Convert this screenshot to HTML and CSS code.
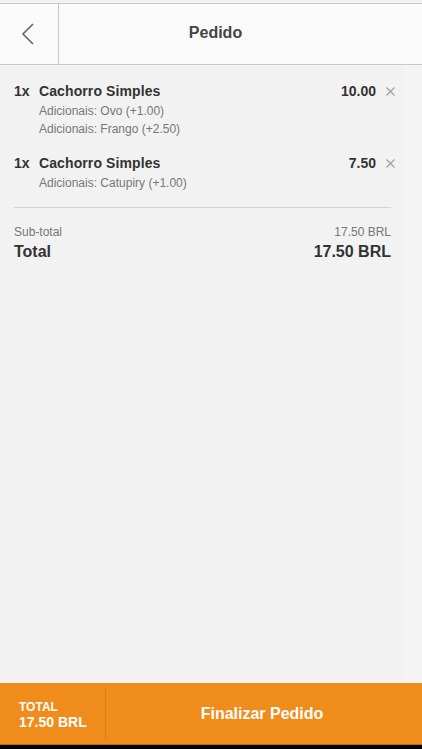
FILE: index.html
```html
<!DOCTYPE html>
<html lang="pt">
<head>
    <meta charset="UTF-8">
    <meta name="viewport" content="width=device-width, initial-scale=1.0">
    <title>Pedido</title>
    <link rel="stylesheet" href="styles.css">
</head>
<body>
    <div class="page">
        <header class="topbar">
            <a class="back" href="#">
                <svg width="14" height="22" viewBox="0 0 14 22"><polyline points="12,1 2,11 12,21" fill="none" stroke="#666" stroke-width="1.6"/></svg>
            </a>
            <h1>Pedido</h1>
            <span class="spacer"></span>
        </header>

        <main class="content">
            <div class="item">
                <span class="qty">1x</span>
                <div class="info">
                    <div class="name">Cachorro Simples</div>
                    <div class="extra">Adicionais: Ovo (+1.00)</div>
                    <div class="extra">Adicionais: Frango (+2.50)</div>
                </div>
                <span class="price">10.00</span>
                <span class="remove"><svg width="9" height="9" viewBox="0 0 9 9"><path d="M0.5 0.5L8.5 8.5M8.5 0.5L0.5 8.5" stroke="#a0a0a0" stroke-width="1.2"/></svg></span>
            </div>
            <div class="item">
                <span class="qty">1x</span>
                <div class="info">
                    <div class="name">Cachorro Simples</div>
                    <div class="extra">Adicionais: Catupiry (+1.00)</div>
                </div>
                <span class="price">7.50</span>
                <span class="remove"><svg width="9" height="9" viewBox="0 0 9 9"><path d="M0.5 0.5L8.5 8.5M8.5 0.5L0.5 8.5" stroke="#a0a0a0" stroke-width="1.2"/></svg></span>
            </div>

            <div class="totals">
                <div class="row sub"><span>Sub-total</span><span>17.50 BRL</span></div>
                <div class="row total"><span>Total</span><span>17.50 BRL</span></div>
            </div>
        </main>

        <footer class="checkout">
            <div class="sum">
                <span class="label">TOTAL</span>
                <span class="value">17.50 BRL</span>
            </div>
            <button class="finish">Finalizar Pedido</button>
        </footer>
    </div>
</body>
</html>
```

FILE: styles.css
```css
body {
    margin: 0;
    background: #000;
    font-family: "Liberation Sans", Arial, sans-serif;
    color: #333;
}

.page {
    height: 745px;
    display: flex;
    flex-direction: column;
    background: #f2f2f2;
    padding-top: 3px;
    box-sizing: border-box;
}

.topbar {
    display: flex;
    height: 62px;
    box-sizing: border-box;
    background: #fafafa;
    border-top: 1px solid #c8c8c8;
    border-bottom: 1px solid #c8c8c8;
}

.back {
    width: 59px;
    border-right: 1px solid #c8c8c8;
    display: flex;
    align-items: center;
    justify-content: center;
    padding-right: 2px;
    box-sizing: border-box;
}

.topbar h1 {
    flex: 1;
    margin: 0;
    text-align: center;
    font-size: 16px;
    font-weight: bold;
    line-height: 58px;
    color: #444;
}

.spacer {
    width: 50px;
}

.content {
    flex: 1;
    padding: 16px 31px 0 14px;
    background: linear-gradient(to right, #f2f2f2 404px, #f4f4f4 404px);
}

.item {
    display: flex;
    align-items: flex-start;
    margin-bottom: 15px;
    margin-right: -4px;
}

.qty {
    width: 25px;
    font-size: 14px;
    font-weight: bold;
    line-height: 21px;
}

.info {
    flex: 1;
}

.name {
    font-size: 14px;
    font-weight: bold;
    line-height: 21px;
    letter-spacing: 0.1px;
}

.extra {
    font-size: 12px;
    color: #777;
    line-height: 18px;
}

.price {
    font-size: 14px;
    font-weight: bold;
    line-height: 21px;
}

.remove {
    width: 19px;
    height: 21px;
    display: flex;
    align-items: center;
    justify-content: flex-end;
}

.totals {
    border-top: 1px solid #d4d4d4;
    margin-top: 15px;
    padding-top: 16px;
}

.row {
    display: flex;
    justify-content: space-between;
}

.sub {
    font-size: 12px;
    color: #777;
    line-height: 16px;
}

.total {
    font-size: 16px;
    font-weight: bold;
    line-height: 24px;
}

.checkout {
    display: flex;
    height: 63px;
    box-sizing: border-box;
    background: #f08c1b;
    border-top: 1px solid #f9f9f9;
    border-bottom: 1px solid #b0701f;
    color: #fff;
}

.sum {
    width: 106px;
    padding: 12px 0 0 19px;
    box-sizing: border-box;
    border-right: 1px solid #dd7f16;
    margin: 5px 0;
    display: flex;
    flex-direction: column;
}

.sum .label {
    font-size: 12px;
    font-weight: bold;
    line-height: 14px;
}

.sum .value {
    font-size: 14px;
    font-weight: bold;
    line-height: 17px;
}

.finish {
    flex: 1;
    background: none;
    border: none;
    color: #fff;
    font-family: inherit;
    font-size: 16px;
    font-weight: bold;
    padding: 0 4px 0 0;
    cursor: pointer;
}
```
